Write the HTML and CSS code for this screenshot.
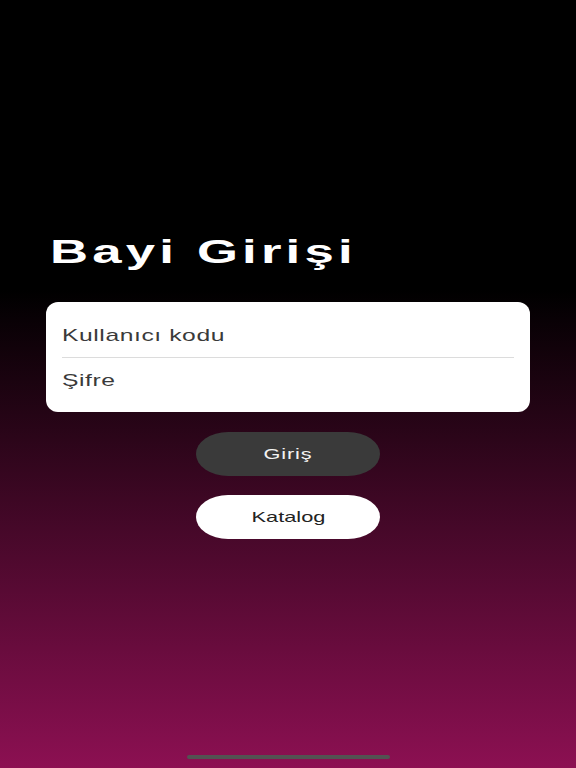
FILE: index.html
```html
<!DOCTYPE html>
<html lang="tr">
<head>
<meta charset="utf-8">
<title>Bayi Girişi</title>
<link rel="stylesheet" href="styles.css">
</head>
<body>
<main class="screen">
  <h1 class="title"><span class="stretch">Bayi Girişi</span></h1>
  <form class="card">
    <div class="field field-first"><span class="stretch">Kullanıcı kodu</span></div>
    <div class="field field-last"><span class="stretch">Şifre</span></div>
  </form>
  <div class="actions">
    <button class="btn btn-dark" type="button"><span class="stretch">Giriş</span></button>
    <button class="btn btn-light" type="button"><span class="stretch">Katalog</span></button>
  </div>
  <div class="home-indicator"></div>
</main>
</body>
</html>
```

FILE: styles.css
```css
html, body {
  margin: 0;
  padding: 0;
}
body {
  width: 576px;
  height: 768px;
  overflow: hidden;
  background: linear-gradient(to bottom, #000 0px, #000 290px, #8c1052 768px);
  font-family: "Liberation Sans", Arial, sans-serif;
}
.screen {
  position: relative;
  height: 768px;
  display: flex;
  flex-direction: column;
}
.stretch {
  display: inline-block;
  transform: scaleX(1.45);
  transform-origin: left center;
  white-space: nowrap;
}
.title {
  margin: 0;
  padding: 231px 0 0 50px;
  font-size: 34px;
  line-height: 40px;
  font-weight: 700;
  color: #fff;
  letter-spacing: 2.7px;
}
.title .stretch {
  transform: scaleX(1.55);
}
.card {
  margin: 31px 46px 0 46px;
  background: #fff;
  border-radius: 12px;
  display: flex;
  flex-direction: column;
}
.field {
  margin: 0 16px;
  font-size: 17px;
  line-height: 20px;
  color: #3a3a3a;
  letter-spacing: 0.4px;
}
.field-first {
  padding: 24px 0 11px;
  border-bottom: 1px solid #dcdcdc;
}
.field-last {
  padding: 13px 0 21px;
}
.actions {
  margin-top: 20px;
  display: flex;
  flex-direction: column;
  align-items: center;
  gap: 19px;
}
.btn {
  width: 184px;
  height: 44px;
  border: none;
  border-radius: 32px / 22px;
  font-family: "Liberation Sans", Arial, sans-serif;
  font-size: 15px;
  line-height: 18px;
  padding: 0;
  display: flex;
  align-items: center;
  justify-content: center;
}
.btn .stretch {
  transform-origin: center center;
}
.btn-dark {
  background: #3a3a3a;
  color: #f2f2f2;
  letter-spacing: 0.6px;
}
.btn-light {
  background: #fff;
  color: #222;
  letter-spacing: 0;
}
.home-indicator {
  position: absolute;
  left: 187px;
  bottom: 9px;
  width: 203px;
  height: 4px;
  border-radius: 2px;
  background: #525252;
}
```
